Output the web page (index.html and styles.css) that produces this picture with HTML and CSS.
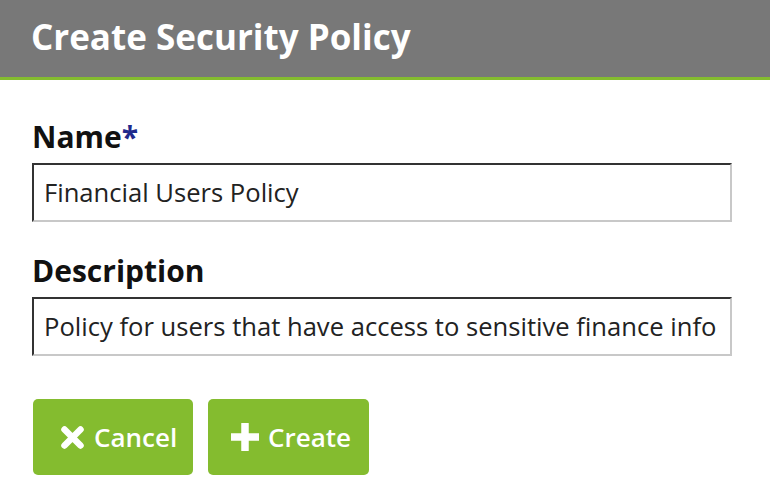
FILE: index.html
```html
<!DOCTYPE html>
<html>
<head>
<meta charset="utf-8">
<link rel="stylesheet" href="styles.css">
</head>
<body>
<div class="header"><h1 class="title">Create Security Policy</h1></div>
<form class="form">
  <div class="field">
    <label class="label">Name<span class="req">*</span></label>
    <div class="input">Financial Users Policy</div>
  </div>
  <div class="field">
    <label class="label">Description</label>
    <div class="input">Policy for users that have access to sensitive finance info</div>
  </div>
  <div class="actions">
    <button type="button" class="btn btn-cancel">
      <svg class="icon" width="23" height="23" viewBox="0 0 23 23"><path d="M3.5 3.5 L19.5 19.5 M19.5 3.5 L3.5 19.5" stroke="#fff" stroke-width="6.5" stroke-linecap="round"/></svg>
      <span>Cancel</span>
    </button>
    <button type="button" class="btn btn-create">
      <svg class="icon" width="28" height="28" viewBox="0 0 28 28"><path d="M14 1 V27 M1 14 H27" stroke="#fff" stroke-width="7.5" stroke-linecap="round"/></svg>
      <span>Create</span>
    </button>
  </div>
</form>
</body>
</html>
```
FILE: styles.css
```css
html, body {
  margin: 0;
  padding: 0;
  background: #fff;
  font-family: "Open Sans", "Noto Sans", sans-serif;
}
.header {
  background: #787878;
  height: 80px;
  box-sizing: border-box;
  border-bottom: 3px solid #84bc2f;
  padding: 19px 0 0 31px;
}
.title {
  margin: 0;
  color: #fff;
  font-size: 35px;
  font-weight: 700;
  line-height: 35px;
}
.form {
  padding: 37px 38px 0 32px;
  display: flex;
  flex-direction: column;
}
.field {
  display: flex;
  flex-direction: column;
  margin-bottom: 29px;
}
.label {
  font-size: 30px;
  font-weight: 700;
  color: #111;
  line-height: 40px;
  margin-bottom: 6px;
}
.req {
  color: #1f2a8c;
}
.input {
  width: 700px;
  height: 59px;
  box-sizing: border-box;
  border-top: 2px solid #333;
  border-left: 2px solid #333;
  border-right: 2px solid #c8c8c8;
  border-bottom: 2px solid #c8c8c8;
  padding-left: 10px;
  font-size: 25.6px;
  color: #222;
  display: flex;
  align-items: center;
  white-space: nowrap;
}
.actions {
  display: flex;
  gap: 15px;
  margin-top: 14px;
  padding-left: 1px;
}
.btn {
  height: 76px;
  border: none;
  border-radius: 5px;
  background: #84bc2f;
  color: #fff;
  font-family: "Open Sans", "Noto Sans", sans-serif;
  font-size: 26px;
  font-weight: 600;
  display: flex;
  align-items: center;
  justify-content: flex-start;
  gap: 10px;
  padding: 0;
}
.btn-cancel { width: 160px; padding-left: 28px; }
.btn-create { width: 161px; padding-left: 23px; gap: 9px; }
.icon { display: block; }
```
